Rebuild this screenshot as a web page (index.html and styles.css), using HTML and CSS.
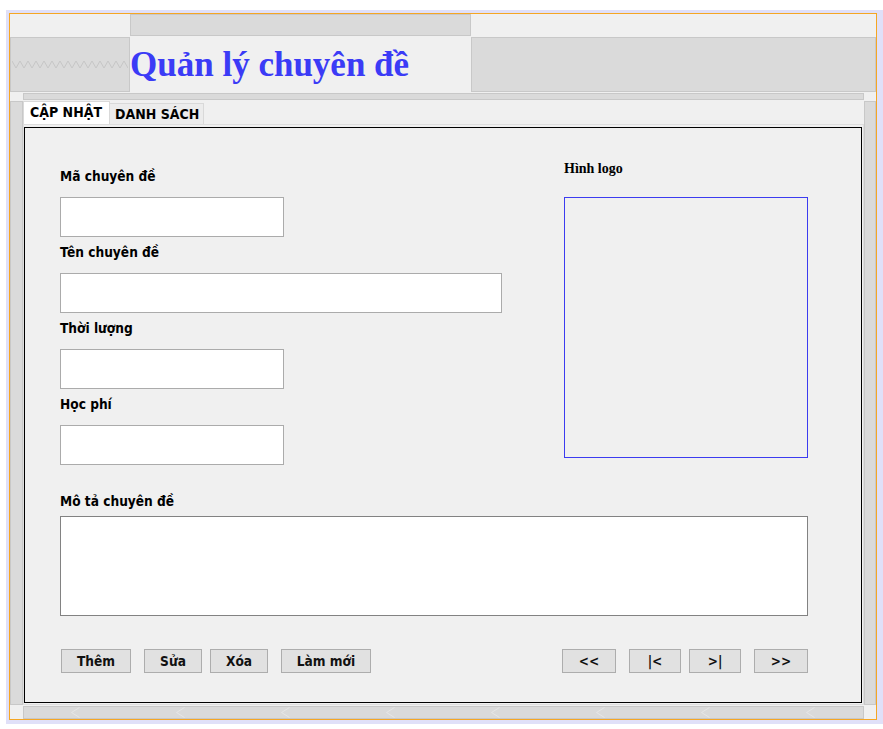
FILE: index.html
```html
<!DOCTYPE html>
<html lang="vi">
<head>
<meta charset="utf-8">
<title>Quản lý chuyên đề</title>
<link rel="stylesheet" href="styles.css">
</head>
<body>
<div class="desk">
  <div class="frame">
    <div class="row-top"><div class="gbox topbox"></div></div>
    <div class="row-head">
      <div class="gbox leftbox">
        <svg class="zigzag" width="116" height="10" viewBox="0 0 116 10">
          <polyline fill="none" stroke="#c6c6c6" stroke-width="1" points="0,1 4,8 8,1 12,8 16,1 20,8 24,1 28,8 32,1 36,8 40,1 44,8 48,1 52,8 56,1 60,8 64,1 68,8 72,1 76,8 80,1 84,8 88,1 92,8 96,1 100,8 104,1 108,8 112,1 116,8"/>
        </svg>
      </div>
      <h1 class="title">Quản lý chuyên đề</h1>
      <div class="gbox rightbox"></div>
    </div>
    <div class="row-hbar"><div class="gbox hbar"></div></div>
    <div class="row-main">
      <div class="gbox vbar"></div>
      <div class="tabpane">
        <div class="tabs">
          <div class="tab active">CẬP NHẬT</div>
          <div class="tab">DANH SÁCH</div>
        </div>
        <div class="panel">
          <div class="panel-inner">
            <div class="cols">
              <div class="fields">
                <div class="label">Mã chuyên đề</div>
                <div class="input short"></div>
                <div class="label">Tên chuyên đề</div>
                <div class="input long"></div>
                <div class="label">Thời lượng</div>
                <div class="input short"></div>
                <div class="label">Học phí</div>
                <div class="input short"></div>
              </div>
              <div class="logo-col">
                <div class="logo-label">Hình logo</div>
                <div class="logo-box"></div>
              </div>
            </div>
            <div class="label desc-label">Mô tả chuyên đề</div>
            <div class="textarea"></div>
            <div class="buttons">
              <div class="btn-group">
                <div class="btn b-them">Thêm</div>
                <div class="btn b-sua">Sửa</div>
                <div class="btn b-xoa">Xóa</div>
                <div class="btn b-lam">Làm mới</div>
              </div>
              <div class="btn-group">
                <div class="btn b-first">&lt;&lt;</div>
                <div class="btn b-prev">|&lt;</div>
                <div class="btn b-next">&gt;|</div>
                <div class="btn b-last">&gt;&gt;</div>
              </div>
            </div>
          </div>
        </div>
      </div>
      <div class="gbox vbar right"></div>
    </div>
    <div class="row-bottom">
      <div class="gbox hscroll">
        <svg class="chev" width="9" height="11" viewBox="0 0 9 11"><polyline points="8.5,0.5 0.5,5.5 8.5,10.5" fill="none" stroke="#e6e6e6"/></svg>
        <svg class="chev" width="9" height="11" viewBox="0 0 9 11"><polyline points="8.5,0.5 0.5,5.5 8.5,10.5" fill="none" stroke="#e6e6e6"/></svg>
        <svg class="chev" width="9" height="11" viewBox="0 0 9 11"><polyline points="8.5,0.5 0.5,5.5 8.5,10.5" fill="none" stroke="#e6e6e6"/></svg>
        <svg class="chev" width="9" height="11" viewBox="0 0 9 11"><polyline points="8.5,0.5 0.5,5.5 8.5,10.5" fill="none" stroke="#e6e6e6"/></svg>
        <svg class="chev" width="9" height="11" viewBox="0 0 9 11"><polyline points="8.5,0.5 0.5,5.5 8.5,10.5" fill="none" stroke="#e6e6e6"/></svg>
        <svg class="chev" width="9" height="11" viewBox="0 0 9 11"><polyline points="8.5,0.5 0.5,5.5 8.5,10.5" fill="none" stroke="#e6e6e6"/></svg>
        <svg class="chev" width="9" height="11" viewBox="0 0 9 11"><polyline points="8.5,0.5 0.5,5.5 8.5,10.5" fill="none" stroke="#e6e6e6"/></svg>
        <svg class="chev" width="9" height="11" viewBox="0 0 9 11"><polyline points="8.5,0.5 0.5,5.5 8.5,10.5" fill="none" stroke="#e6e6e6"/></svg>
      </div>
    </div>
  </div>
</div>
</body>
</html>
```
FILE: styles.css
```css
* { box-sizing: border-box; }
html, body { margin: 0; padding: 0; background: #ffffff; }
body { font-family: "DejaVu Sans Condensed", "DejaVu Sans", sans-serif; }

.desk {
  margin: 10px 0 0 6px;
  padding: 3px 7px 4px 3px;
  width: 878px;
  background: #e0e0f8;
}
.frame {
  width: 868px;
  height: 707px;
  border: 1px solid #f5a623;
  background: #f0f0f0;
  display: flex;
  flex-direction: column;
}
.gbox {
  background: #dadada;
  border: 1px solid #c8c8c8;
}
.row-top { height: 23px; flex: none; }
.topbox { margin-left: 120px; width: 341px; height: 22px; }

.row-head { height: 55px; flex: none; display: flex; }
.leftbox {
  width: 120px; height: 55px; flex: none;
  display: flex; align-items: flex-start; padding-top: 22px; padding-left: 1px;
}
.zigzag { display: block; }
.title {
  margin: 0;
  width: 341px; flex: none;
  font-family: "Liberation Serif", "Times New Roman", serif;
  font-weight: bold;
  font-size: 35px;
  line-height: 55px;
  color: #3b3bf6;
  white-space: nowrap;
}
.rightbox { width: 405px; height: 55px; flex: none; }

.row-hbar { height: 9px; flex: none; padding-top: 1px; }
.hbar { margin-left: 13px; width: 841px; height: 7px; }

.row-main { height: 604px; flex: none; display: flex; }
.vbar { width: 13px; flex: none; }
.vbar.right { width: 12px; }
.tabpane { width: 841px; flex: none; display: flex; flex-direction: column; }

.tabs { height: 23px; display: flex; align-items: flex-end; flex: none; }
.tab {
  font-weight: bold;
  font-size: 14px;
  color: #000;
  border: 1px solid #d9d9d9;
  border-bottom: none;
  white-space: nowrap;
}
.tab.active {
  width: 87px; height: 23px;
  background: #ffffff;
  padding: 2px 0 0 6px;
}
.tab + .tab {
  width: 94px; height: 21px;
  background: #ececec;
  border-left: none;
  padding: 2px 0 0 5px;
}

.panel {
  flex: 1;
  border: 1px solid #dedede;
  padding: 2px 1px 1px 0;
}
.panel-inner {
  height: 576px;
  border: 1px solid #000;
  padding: 33px 0 0 35px;
}
.cols { display: flex; }
.fields { width: 504px; flex: none; padding-top: 8px; }
.label {
  font-weight: bold;
  font-size: 13.6px;
  line-height: 14px;
  height: 16px;
  color: #000;
  margin-bottom: 12px;
  white-space: nowrap;
}
.input {
  height: 40px;
  background: #fff;
  border: 1px solid #ababab;
  margin-bottom: 8px;
}
.input.short { width: 224px; }
.input.long { width: 442px; }

.logo-col { width: 244px; flex: none; }
.logo-label {
  font-family: "Liberation Serif", "Times New Roman", serif;
  font-weight: bold;
  font-size: 14px;
  line-height: 16px;
  height: 16px;
  color: #000;
  margin-bottom: 20px;
}
.logo-box {
  width: 244px; height: 261px;
  border: 1px solid #3c3cf0;
}

.desc-label { margin-top: 21px; margin-bottom: 6px; }
.textarea {
  width: 748px; height: 100px;
  background: #fff;
  border: 1px solid #828282;
}

.buttons {
  width: 748px;
  margin-top: 33px;
  display: flex;
  justify-content: space-between;
}
.btn-group { display: flex; }
.btn {
  height: 24px;
  background: #e1e1e1;
  border: 1px solid #adadad;
  font-weight: bold;
  font-size: 13.6px;
  line-height: 22px;
  text-align: center;
  color: #111;
  white-space: nowrap;
}
.b-them { width: 70px; margin-left: 1px; }
.b-sua { width: 58px; margin-left: 13px; }
.b-xoa { width: 58px; margin-left: 8px; }
.b-lam { width: 90px; margin-left: 13px; }
.b-first { width: 54px; }
.b-prev { width: 52px; margin-left: 13px; }
.b-next { width: 52px; margin-left: 8px; }
.b-last { width: 54px; margin-left: 13px; }

.row-bottom { height: 14px; flex: none; padding-top: 1px; }
.hscroll {
  margin-left: 13px; width: 841px; height: 13px;
  display: flex; align-items: center;
  padding-left: 47px;
  gap: 96px;
}
.chev { display: block; flex: none; }
```
